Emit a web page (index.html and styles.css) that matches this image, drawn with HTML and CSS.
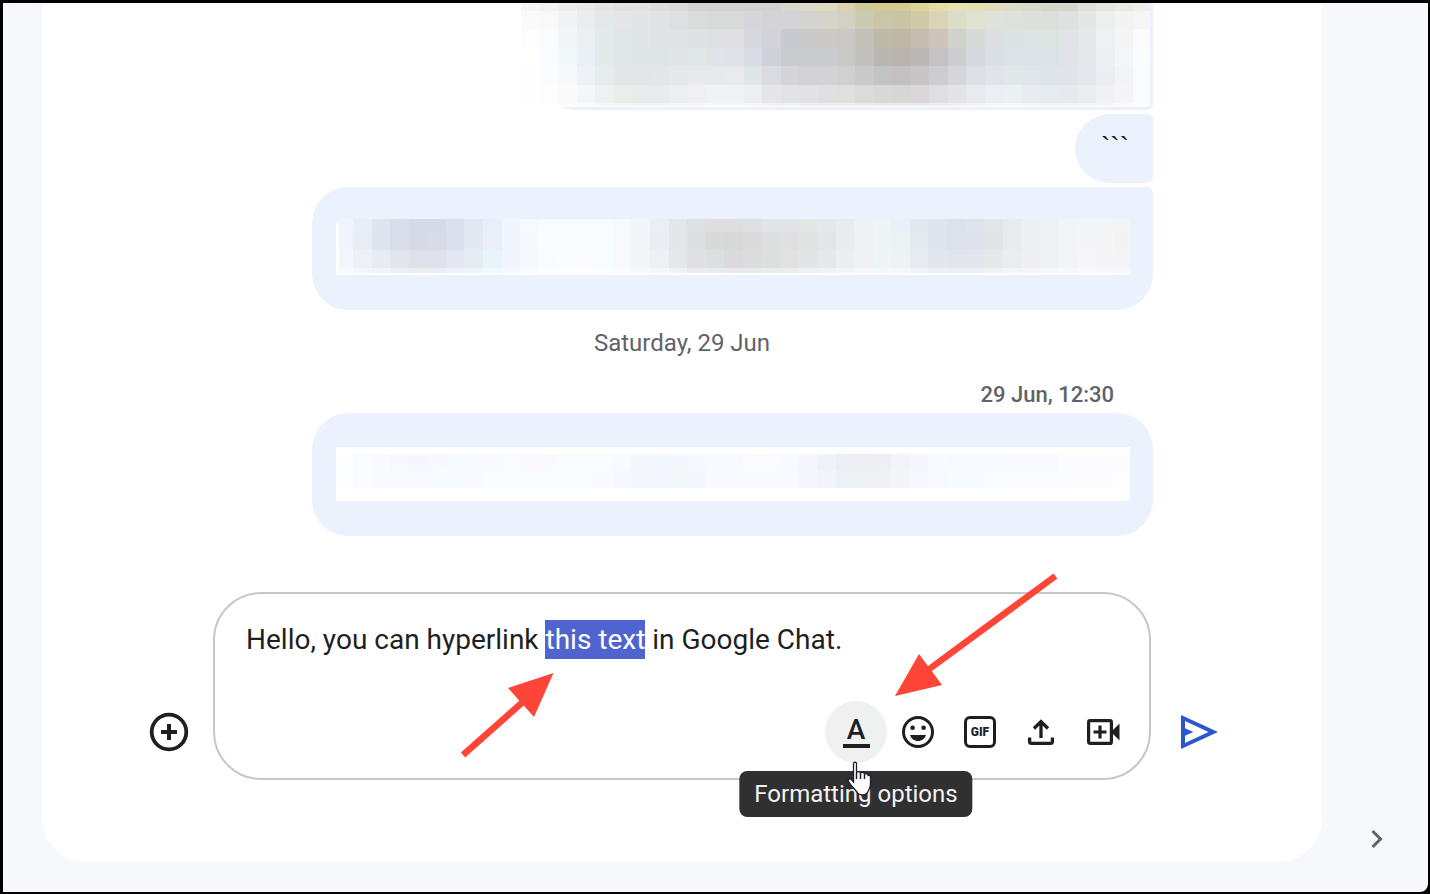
FILE: index.html
```html
<!DOCTYPE html>
<html lang="en-GB">
<head>
<meta charset="utf-8">
<meta name="viewport" content="width=device-width, initial-scale=1">
<title>Google Chat</title>
<link rel="stylesheet" href="styles.css">
</head>
<body>
<div class="frame">
  <main class="panel">
    <section class="messages" aria-label="Messages">
      <div class="bubble bubble-media">
        <svg class="mosaic mosaic-media" id="mosaic-media" viewBox="0 0 629 104" preserveAspectRatio="none" aria-hidden="true"></svg>
      </div>
      <p class="bubble bubble-short">```</p>
      <div class="bubble bubble-last">
        <svg class="mosaic mosaic-line" id="mosaic-first" viewBox="0 0 794 56" preserveAspectRatio="none" aria-hidden="true"></svg>
      </div>
    </section>
    <h2 class="day">Saturday, 29 Jun</h2>
    <section class="messages" aria-label="Saturday, 29 Jun">
      <time class="stamp" datetime="12:30">29 Jun, 12:30</time>
      <div class="bubble bubble-single">
        <svg class="mosaic mosaic-line" id="mosaic-second" viewBox="0 0 794 56" preserveAspectRatio="none" aria-hidden="true"></svg>
      </div>
    </section>
    <form class="compose">
      <button class="icon-button add" type="button" aria-label="Add">
        <svg width="40" height="40" viewBox="0 0 40 40" fill="none" stroke="#1f1f1f"><circle cx="20" cy="20" r="17.3" stroke-width="3.8"/><path d="M20 12v16M12 20h16" stroke-width="4"/></svg>
      </button>
      <div class="box">
        <textarea class="message" id="message" rows="2" aria-label="Message">Hello, you can hyperlink this text in Google Chat.</textarea>
        <div class="tools">
          <div class="tool-tip-anchor">
            <button class="icon-button active" type="button" aria-label="Formatting options" aria-describedby="tip"><span class="letter">A</span></button>
            <div class="tooltip" id="tip" role="tooltip">Formatting options</div>
            <svg class="pointer" width="26" height="36" viewBox="0 0 26 36" aria-hidden="true"><path d="M6.500 2.500C6.500.8 9.500.8 9.500 2.500V12c.5-2 3.700-2 4 .3.800-1.500 3.700-1.200 4 .9 1-1 3.500-.5 3.700 1.300 1-.6 2.300 0 2.300 1.800V23c0 3-.8 4.500-2 6.500-1 2.500-2 4.500-5.500 4.500s-5-1-6-3C7 27.500 4 24.500 1.500 20.500c-1.200-2 1.500-3.500 3-2L6.500 21z" fill="#fff" stroke="#1b1b35" stroke-width="1.300"/><path d="M9.500 12v6M13.500 12.500V18M17.500 13.500V18" stroke="#1b1b35" stroke-width="1.500"/></svg>
          </div>
          <button class="icon-button" type="button" aria-label="Emoji">
            <svg width="36" height="36" viewBox="0 0 36 36"><circle cx="18" cy="18" r="14.500" fill="none" stroke="#1f1f1f" stroke-width="3"/><circle cx="12.600" cy="13.800" r="2.300" fill="#1f1f1f"/><circle cx="23.600" cy="13.800" r="2.300" fill="#1f1f1f"/><path d="M10 21h16c-1.100 3.800-4.300 6-8 6s-6.900-2.200-8-6z" fill="#1f1f1f"/></svg>
          </button>
          <button class="icon-button" type="button" aria-label="GIF"><span class="gif">GIF</span></button>
          <button class="icon-button" type="button" aria-label="Upload file">
            <svg width="36" height="36" viewBox="0 0 36 36" fill="none" stroke="#1f1f1f" stroke-width="3.300"><path d="M17 24V8M10 14.500l7-7 7 7"/><path d="M5.600 23.500v4c0 1.200.7 1.900 1.900 1.900h19c1.200 0 1.900-.7 1.900-1.900v-4"/></svg>
          </button>
          <button class="icon-button" type="button" aria-label="Add video meeting">
            <svg width="36" height="36" viewBox="0 0 36 36"><rect x="2.600" y="6.600" width="22.800" height="22.800" rx="1.500" fill="none" stroke="#1f1f1f" stroke-width="3.200"/><path d="M14 11.500v13M7.500 18h13" stroke="#1f1f1f" stroke-width="3.200"/><path d="M25.500 17.500l8-8v17l-8-8z" fill="#1f1f1f"/></svg>
          </button>
        </div>
        <svg class="arrows" width="860" height="190" viewBox="0 0 860 190" fill="#ff4438" stroke="#ff4438" aria-hidden="true"><path d="M250 183l62-55" stroke-width="6.500"/><path d="M340.500 101L295 116l26 29z" stroke="none"/><path d="M842.500 4L715 98" stroke-width="6.500"/><path d="M682 124l24-42 23 31z" stroke="none"/></svg>
      </div>
      <button class="icon-button send" type="submit" aria-label="Send message">
        <svg width="38" height="36" viewBox="0 0 38 36"><path d="M1 1l37 17L1 35zM5 7v7.300l8.300 3.700L5 21.700V29l23.500-11z" fill="#2c56cf" fill-rule="evenodd"/></svg>
      </button>
    </form>
  </main>
  <aside class="rail">
    <button class="rail-toggle" type="button" aria-label="Show side panel">
      <svg width="24" height="24" viewBox="0 0 24 24" fill="none" stroke="#5f6368" stroke-width="3"><path d="M7.500 4l8 8-8 8"/></svg>
    </button>
  </aside>
</div>
<script src="mosaic.js"></script>
</body>
</html>
```
FILE: styles.css
```css
* { box-sizing: border-box; }

body {
  margin: 0;
  background: #000;
  color: #1f1f1f;
  font-family: Roboto, "Liberation Sans", sans-serif;
}

button {
  border: 0;
  padding: 0;
  background: none;
  color: inherit;
  font: inherit;
}

.frame {
  display: flex;
  min-height: 100vh;
  border: solid #000;
  border-width: 3px 2px 2px 3px;
  border-radius: 0 0 10px 0;
  padding-left: 39px;
  background: #f6f8fc;
}

.panel {
  flex: 1;
  min-width: 0;
  margin-bottom: 30px;
  border-radius: 0 0 44px 44px;
  background: #fff;
}

.messages {
  display: flex;
  flex-direction: column;
  align-items: flex-end;
  gap: 4px;
  padding: 0 169px 0 270px;
}

.bubble {
  margin: 0;
  background: #ebf2fe;
}

.bubble-media {
  width: 73%;
  padding: 0 3px 3px 0;
  border-radius: 0 0 6px 36px;
}

.bubble-short {
  padding: 13px 24px 17px 26px;
  border-radius: 36px 6px 6px 36px;
  font-family: "Liberation Sans", sans-serif;
  font-size: 28px;
  line-height: 39px;
}

.bubble-last {
  width: 100%;
  padding: 32px 23px 35px 24px;
  border-radius: 36px 6px 36px 36px;
}

.bubble-single {
  width: 100%;
  padding: 32px 23px 35px 24px;
  border-radius: 36px;
}

.mosaic { display: block; }

.mosaic-media {
  width: calc(100% + 18px);
  height: 104px;
  margin-left: -18px;
  border-radius: 0 0 4px 0;
}

.mosaic-line {
  width: 100%;
  height: 56px;
  border-radius: 0 0 3px 0;
}

.day {
  margin: 17px 0;
  color: #5f6368;
  font-size: 24px;
  font-weight: 400;
  line-height: 32px;
  text-align: center;
}

.stamp {
  padding: 5px 39px 0 0;
  color: #5f6368;
  font-size: 22px;
  font-weight: 500;
  line-height: 28px;
}

.compose {
  display: flex;
  align-items: flex-end;
  padding: 56px 92px 0 96px;
}

.box {
  position: relative;
  flex: 1;
  min-width: 0;
  margin: 0 17px 0 13px;
  padding: 26px 14px 15px 31px;
  border: 2px solid #c7c7c7;
  border-radius: 48px;
}

.message {
  display: block;
  width: 100%;
  height: 81px;
  border: 0;
  padding: 0;
  outline: 0;
  resize: none;
  background: none;
  color: #1f1f1f;
  font: 400 28px/39px Roboto, "Liberation Sans", sans-serif;
  caret-color: transparent;
}

.message::selection {
  background: #5064cf;
  color: #fff;
}

.tools {
  display: flex;
  justify-content: flex-end;
}

.icon-button {
  display: flex;
  align-items: center;
  justify-content: center;
  width: 62px;
  height: 62px;
  border-radius: 50%;
}

.add, .send { margin-bottom: 17px; }

.active { background: #eff1f1; }

.letter {
  width: 27px;
  border-bottom: 4px solid #1f1f1f;
  font-size: 28px;
  font-weight: 500;
  line-height: 28px;
}

.gif {
  width: 32px;
  border: 3px solid #1f1f1f;
  border-radius: 6px;
  font-size: 12px;
  font-weight: 900;
  line-height: 26px;
}

.tool-tip-anchor { position: relative; }

.tooltip {
  position: absolute;
  top: 70px;
  left: 50%;
  z-index: 2;
  padding: 0 15px;
  border-radius: 8px;
  transform: translateX(-50%);
  background: #303030;
  color: #f2f2f2;
  font-size: 24px;
  line-height: 46px;
  white-space: nowrap;
}

.pointer {
  position: absolute;
  top: 60px;
  left: 22px;
  z-index: 3;
}

.arrows {
  position: absolute;
  top: -22px;
  left: -2px;
  z-index: 1;
  pointer-events: none;
}

.rail {
  display: flex;
  align-items: flex-end;
  justify-content: center;
  width: 106px;
  padding: 0 0 41px 3px;
}

.rail-toggle {
  display: flex;
}
```
FILE: mosaic.js
```js
// Each row is [top, height, opacity, colours]; cells share one pitch.
const PITCH = 18.56;
const NS = "http://www.w3.org/2000/svg";

function rect(svg, x, y, width, height, fill, opacity) {
  const cell = document.createElementNS(NS, "rect");
  const attributes = { x, y, width, height, fill, "fill-opacity": opacity, "shape-rendering": "crispEdges" };
  for (const name in attributes) cell.setAttribute(name, attributes[name]);
  svg.appendChild(cell);
}

function mosaic(id, start, clip, rows) {
  const svg = document.getElementById(id);
  for (const [top, height, opacity, colours] of rows) {
    colours.trim().split(/\s+/).forEach((colour, i) => {
      const left = Math.max(clip, Math.round(start + i * PITCH));
      const right = Math.round(start + (i + 1) * PITCH);
      rect(svg, left, top, right - left, height, "#" + colour, opacity);
    });
  }
}

const media = [
  "f5f5f5 f1f3f1 edefee e8e9e9 e4e5e3 e0e2e0 dfe0e0 dcdddc d8dad8 d3d3d2 d2d2d2 d2d2d2 d1d1d1 d2d1d2 d8d8cc dbdac8 dddbc0 d9d3b0 d0cc9a d2ca90 d3cb90 dcd598 e4dea4 e4e1ae e3e2b2 e1dec0 dcdcc8 d9dac9 d5d6ca d5d5cc dedfda e5e5e2 e9e9e6 efefed",
  "fafafa f8f9f8 f2f3f6 ebeced e3e8e8 e5e6e7 e3e4e6 e1e2e3 dddfe0 dadcdc d9dbda d9dbda d7d7db d4d3d8 d4d4d6 d3d4cf d4d4c8 d2d1c2 cbcbb2 c9c5a6 c9c4a3 d0caa8 dad4b6 dcdcc8 dfe1d1 dee2d8 dde1d9 dcdfda dcdeda dfe1df e5e7e5 edeeee f2f4f3 f6f6f6",
  "fdfdfd fafbfc f3f5f7 e9eff3 e3eaec e1e6e8 e0e5e8 dfe3e5 e1e2e4 dde1e1 dedfe3 dedee3 d7d7de d2d2d8 c9cacf cacaca cccac6 cac9c5 c3c0b8 bdbaa8 bdb9a4 c4beb0 cbc5be d1d2cc d8dad7 dbdfe0 dbe2e2 dce3e3 dce4e2 e0e4e8 e5e9ec eef0f2 f4f6f5 fbfbfb",
  "fefffe fafbfe f3f8f8 eaf1f6 e4eaec e1e6e8 dfe5e7 dfe4e6 e1e5e7 e1e6e6 e0e4e8 e0e2e7 d9dce2 d0d1d8 cacbcf cacbcd cacbcc c9c9c7 c1c0bc b8b6b1 b9b4ae bbb8b3 c5c2c4 cdcdd0 d5d9dd dadfe3 dce2e7 dce2e6 dce3e6 e0e4e8 e4e8eb eeeff2 f4f6f8 fbfdfd",
  "fefefe fbfcfe f7f8fc ecf2f5 e6ebee e3e7e8 e1e7e9 e3e7e9 e7e8ea e7eaea e6eaeb e8eaeb e0e5e8 dadbe1 d4d4da d2d2d6 d3d3d6 d0d0d0 c9c9c9 c4c3c3 c4c0c1 c8c5c6 cdccd1 d5d6dc dce0e4 e0e3e9 e2e8ea e0e6ea e0e5ea e1e5ea e4e7ed e9eef2 f3f4f7 fafbfd",
  "fefefe fdfdfd fafafb f5f6f8 eff0f2 ebecec e9eaec e9eaec edeef0 f0f0f2 f0f2f4 f0f2f4 edeef0 e6e6e9 e2e3e5 e2e2e4 e0e0e2 dfdfdf dbdbdb d8d8d7 d8d7d7 dbd8dc dfdfe2 e4e4e8 e9eaef eaeff3 ebf0f4 e8ecf2 e6ebf0 e6e9f0 e8edef f0f0f5 f5f5f8 fafbfd"
];
rect(document.getElementById("mosaic-media"), 0, 0, 629, 104, "#fff", 1);
mosaic("mosaic-media", 0, 0, [
  [0, 8, 1, media[0]], [8, 18, 1, media[1]], [26, 19, 1, media[2]], [45, 18, 1, media[3]],
  [63, 19, 1, media[4]], [82, 18, 1, media[5]], [100, 3, 0.5, media[5]]
]);

const first = [
  "f0f5fd e9eef5 dfe4ef d9ddea d5daea d6dae8 dae0ec e1e8f3 e9eef9 f0f5fe f6fafe f9fbff f9fbff f9fbff f9fbff f7f9fd f2f5f9 ebeef2 e4e7ea dddfe3 dedde0 dedee1 dfe0e4 e3e4e8 e2e4e7 e4e6e6 e5e7e9 eaebee f0f1f5 eff4f8 eaf0f6 e4e9f1 dee5ed dbe3ea dee3ec e3e6e9 e9eaed eeeff2 f0f1f5 f3f4f8 f4f5fa f4f5f9 f4f4f6",
  "f0f5fc e8ecf4 e0e4ef d9dde9 d6dae7 d7dbe8 dbe1ec e2e9f3 e9eef8 f0f5ff f5f8fe fafcff fbfcff fbfcff f7fcff f7f9fd f2f5f9 eaeef2 e3e6ea dbdee2 d8dada d7d8d8 dad9dc dddede dfdfe0 e0e2e1 e4e5e8 eaebee ecf1f5 eef3f8 edf2f4 e4e9f2 dce5ec dce1ea dde1eb e3e4ea e9eaed eeeff2 f0f1f5 f3f4f8 f4f5fa f4f5f5 f2f4f4",
  "f3f6fa edf0f9 e7ebf4 e1e5ee dfe2ea dfe2ec e2e7f1 e4edf4 e9f3fa f0f5ff f5f9fe f9fbff f8fdff fbfcff f7fcfe f7f9fd f4f5f9 edf0f4 e4e8eb dfe0e3 dbdfdf dadade dbdddc dddfdf e1e1e1 e3e4e7 e6e7ea ecedf0 f0f1f4 eff4f7 ecf2f5 e7ebf4 e2e6ef e1e5ee e3e6ef e7e8eb ebecee eeeff2 f0f1f5 f3f4f8 f6f6fa f5f5f9 f3f4f6"
];
rect(document.getElementById("mosaic-first"), 0, 3, 794, 53, "#fff", 1);
mosaic("mosaic-first", -1.5, 3, [
  [0, 13, 1, first[0]], [13, 18, 1, first[1]], [31, 18, 1, first[2]], [49, 5, 0.6, first[2]]
]);

rect(document.getElementById("mosaic-second"), 0, 2, 794, 54, "#fff", 1);
mosaic("mosaic-second", -1.5, 1, [
  [9, 16, 1, "fbfdff f8fbff f8faff f6f8ff f6f7fe f6f8fe f5fafe f7fbff f9faff f7fcff f9f9ff f9f9fe f8fcff f8fcff f8fcff f6fbff f4f8fb f3f7ff f4f7fe f5f9ff f6f9ff f6faff f9fbff f9fbff f6fbff f5f6fb eff3f7 ebeff4 edeef3 eeeff3 f3f4f8 f5f6fb f7fafe f5faff f7fbff f7fbff f9faff f9faff f9faff fbfcff fbfcff fbfcff fcfcfe"],
  [25, 18, 1, "fcfdff fafbff f9faff f9faff f8faff f6fbff f6fbff f8faff f8fcff f8fcff f8fcff f8fcff f8fcff f8fcff f8faff f5f8fe f4f7fd f3f6ff f2f7fa f4f7fd f8f9ff f8f9ff f9faff f9faff f9faff f6f7fc f3f5fa ecf1f5 eff0f4 f0f1f5 f4f5f9 f6f8fd f8f9ff f6fbff f6fbff f8fbff f9fbff f9fbff f9fbff fbfcff fcfcff fcfcff fdfdfe"]
]);

// The phrase to be linked starts out selected.
const message = document.getElementById("message");
const phrase = "this text";
const at = message.value.indexOf(phrase);
message.focus();
message.setSelectionRange(at, at + phrase.length);
```
